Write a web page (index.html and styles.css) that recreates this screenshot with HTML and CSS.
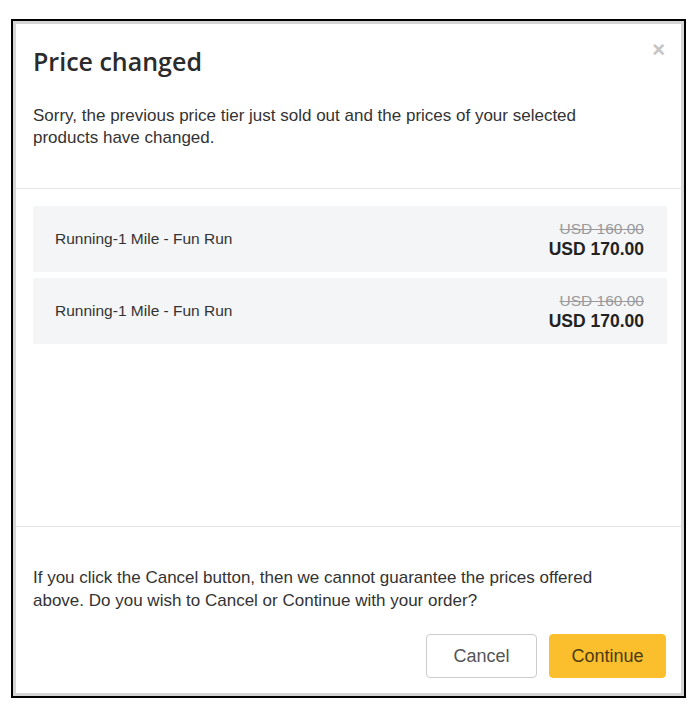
FILE: index.html
```html
<!DOCTYPE html>
<html>
<head>
<meta charset="utf-8">
<link rel="stylesheet" href="styles.css">
</head>
<body>
<div class="frame">
  <div class="modal">
    <div class="header">
      <h1 class="title">Price changed</h1>
      <span class="close">×</span>
      <p class="intro">Sorry, the previous price tier just sold out and the prices of your selected products have changed.</p>
    </div>
    <div class="content">
      <div class="row">
        <span class="name">Running-1 Mile - Fun Run</span>
        <div class="prices">
          <span class="old">USD 160.00</span>
          <span class="new">USD 170.00</span>
        </div>
      </div>
      <div class="row">
        <span class="name">Running-1 Mile - Fun Run</span>
        <div class="prices">
          <span class="old">USD 160.00</span>
          <span class="new">USD 170.00</span>
        </div>
      </div>
    </div>
    <div class="footer">
      <p class="note">If you click the Cancel button, then we cannot guarantee the prices offered above. Do you wish to Cancel or Continue with your order?</p>
      <div class="actions">
        <button class="btn btn-cancel">Cancel</button>
        <button class="btn btn-continue">Continue</button>
      </div>
    </div>
  </div>
</div>
</body>
</html>
```

FILE: styles.css
```css
html, body {
  margin: 0;
  padding: 0;
  background: #ffffff;
}
body {
  font-family: "Liberation Sans", Arial, sans-serif;
  color: #333333;
}
.frame {
  margin: 19px 0 0 11px;
  width: 675px;
  height: 679px;
  border: 2px solid #000000;
  box-sizing: border-box;
  display: flex;
  flex-direction: column;
}
.modal {
  flex: 1;
  border: 3px solid #d4d4d4;
  display: flex;
  flex-direction: column;
  background: #ffffff;
}
.header {
  position: relative;
  padding: 22px 17px 39px 17px;
  border-bottom: 1px solid #e6e6e6;
}
.title {
  margin: 0;
  font-family: "Open Sans", sans-serif;
  font-weight: 600;
  font-size: 25px;
  line-height: 30px;
  color: #2b2b2b;
}
.close {
  position: absolute;
  top: 14px;
  right: 16px;
  font-size: 22px;
  font-weight: bold;
  color: #c4c4c4;
  line-height: 24px;
}
.intro {
  margin: 29px 0 0 0;
  max-width: 600px;
  font-size: 17px;
  line-height: 22px;
  color: #333333;
}
.content {
  flex: 1;
  padding: 17px 14px 0 17px;
  display: flex;
  flex-direction: column;
  gap: 6px;
  border-bottom: 1px solid #e6e6e6;
}
.row {
  height: 66px;
  background: #f4f5f7;
  display: flex;
  align-items: center;
  justify-content: space-between;
  padding: 0 23px 0 22px;
}
.name {
  font-size: 15.5px;
  color: #333333;
}
.prices {
  display: flex;
  flex-direction: column;
  align-items: flex-end;
  padding-top: 3px;
}
.old {
  font-size: 15.5px;
  line-height: 18px;
  color: #9a9a9a;
  text-decoration: line-through;
}
.new {
  font-size: 17.5px;
  line-height: 23px;
  font-weight: bold;
  color: #222222;
}
.footer {
  padding: 39px 15px 15px 17px;
}
.note {
  margin: 0;
  max-width: 600px;
  font-size: 17px;
  line-height: 23px;
  color: #333333;
}
.actions {
  display: flex;
  justify-content: flex-end;
  gap: 12px;
  margin-top: 22px;
}
.btn {
  height: 44px;
  border-radius: 4px;
  font-family: "Liberation Sans", Arial, sans-serif;
  font-size: 18px;
  color: #555555;
  cursor: pointer;
}
.btn-cancel {
  width: 111px;
  background: #ffffff;
  border: 1px solid #cccccc;
}
.btn-continue {
  width: 117px;
  background: #fbbf2d;
  border: 1px solid #fbbf2d;
  color: #4a3a10;
}
```
